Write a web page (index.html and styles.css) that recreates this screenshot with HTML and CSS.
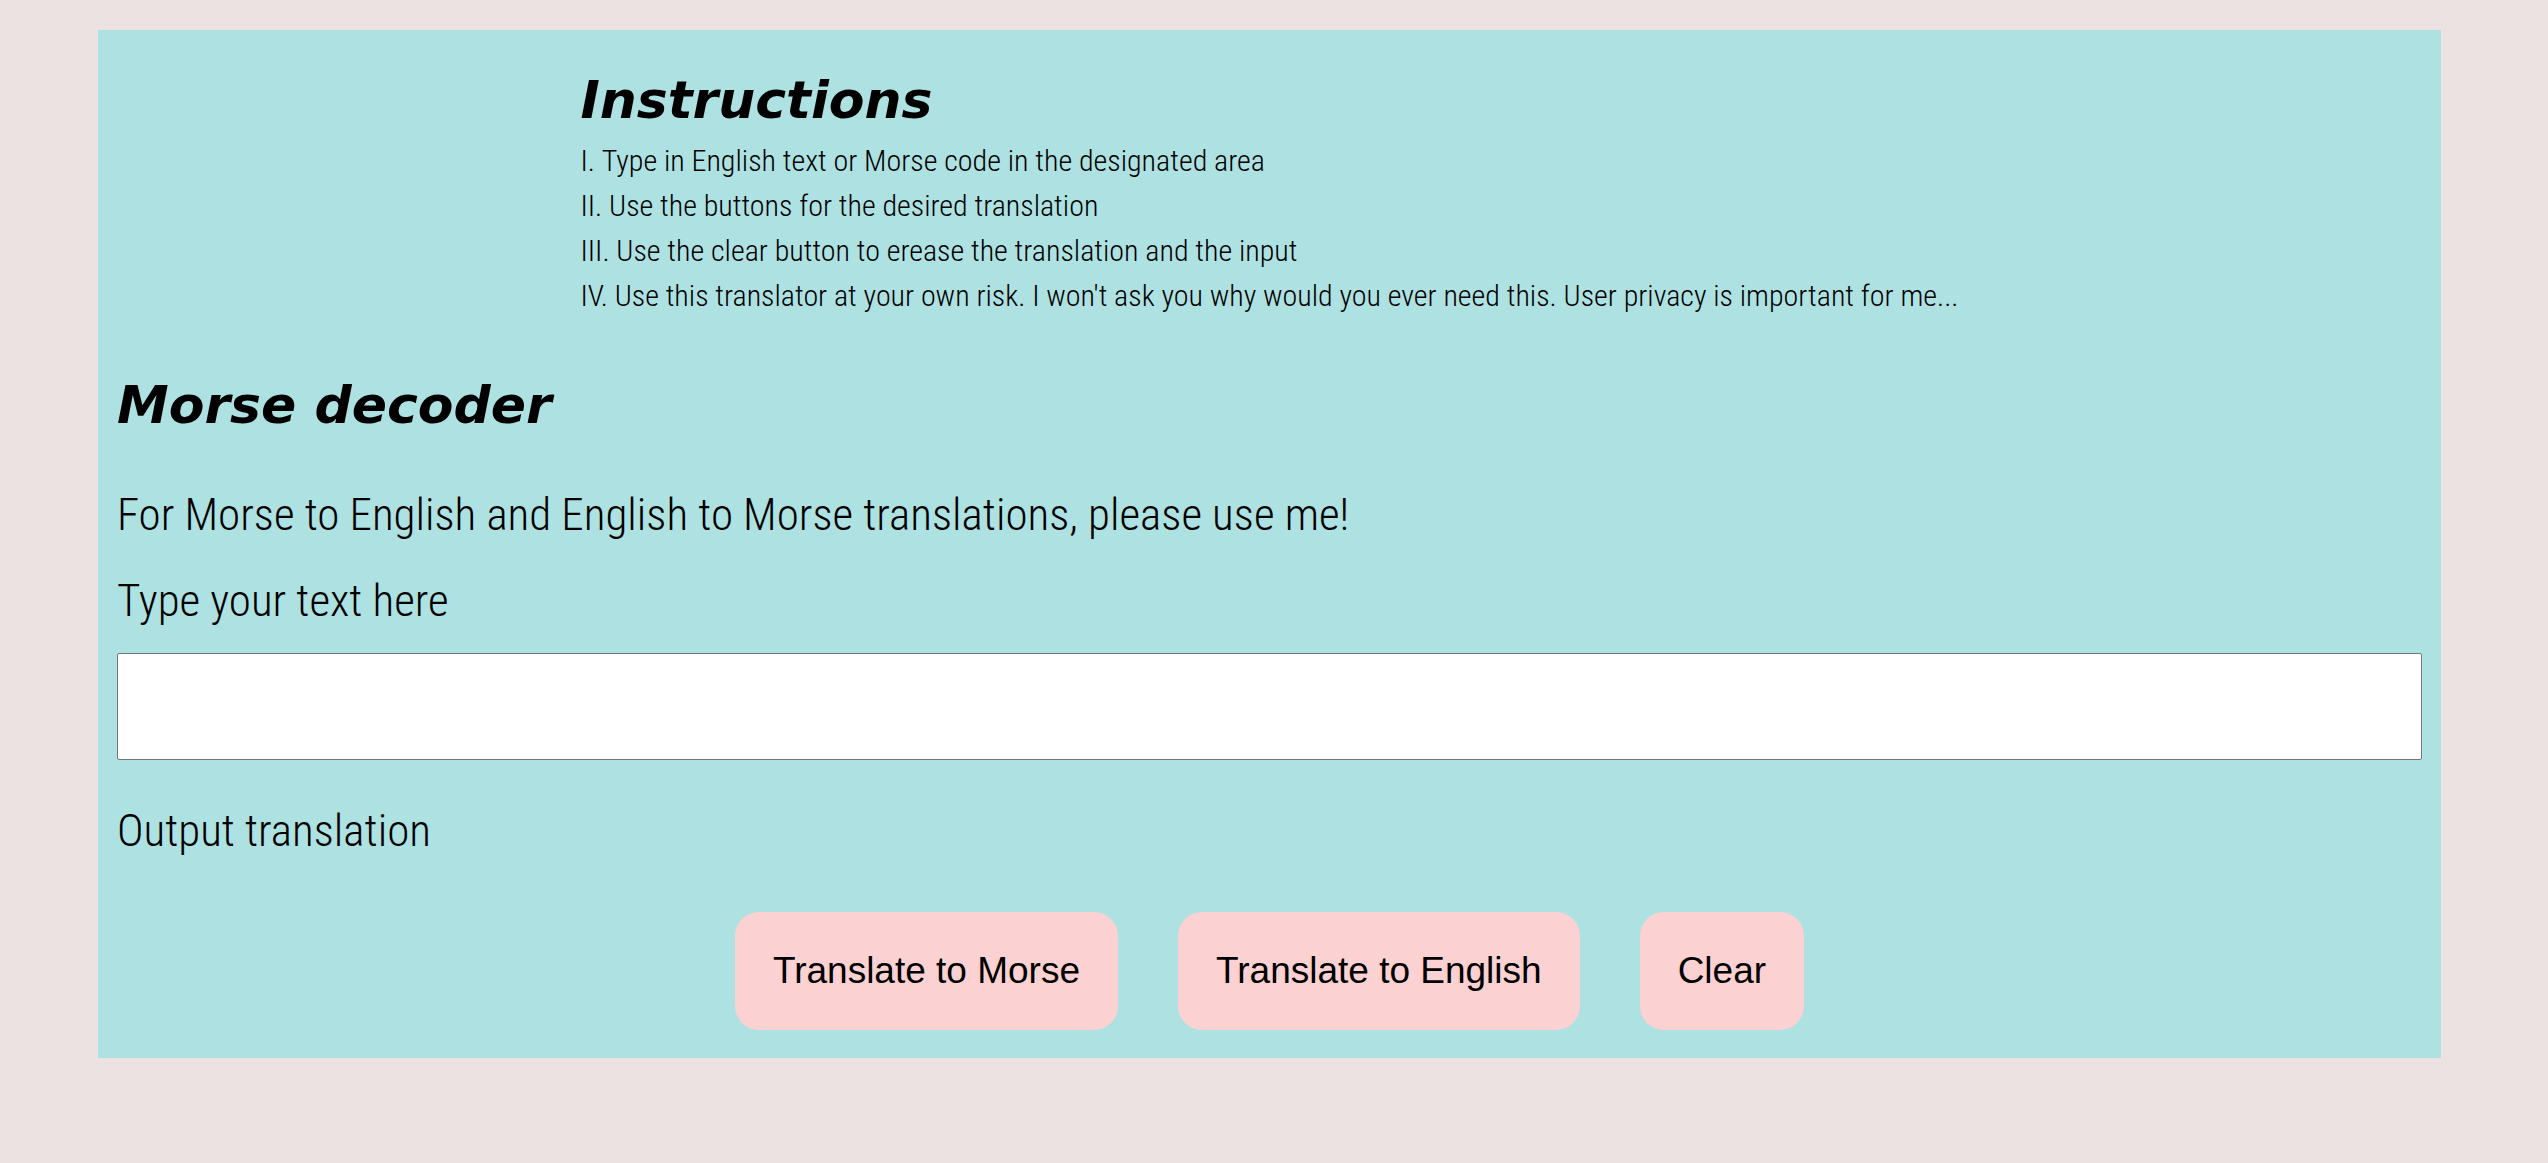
FILE: index.html
```html
<!DOCTYPE html>
<html lang="en">
<head>
<meta charset="utf-8">
<meta name="viewport" content="width=device-width, initial-scale=1">
<title>Morse decoder</title>
<link rel="stylesheet" href="styles.css">
</head>
<body>
<main class="container">
  <section class="instructions">
    <h2 class="heading">Instructions</h2>
    <ol class="steps">
      <li>Type in English text or Morse code in the designated area</li>
      <li>Use the buttons for the desired translation</li>
      <li>Use the clear button to erease the translation and the input</li>
      <li>Use this translator at your own risk. I won't ask you why would you ever need this. User privacy is important for me...</li>
    </ol>
  </section>
  <h1 class="heading title">Morse decoder</h1>
  <p class="text intro">For Morse to English and English to Morse translations, please use me!</p>
  <label class="text label" for="source">Type your text here</label>
  <input class="source" id="source" type="text">
  <p class="text output">Output translation</p>
  <div class="actions">
    <button class="button" type="button">Translate to Morse</button>
    <button class="button" type="button">Translate to English</button>
    <button class="button" type="button">Clear</button>
  </div>
</main>
</body>
</html>
```
FILE: styles.css
```css
* {
  box-sizing: border-box;
}

body {
  margin: 0;
  padding: 30px 107px 30px 98px;
  background: #ece2e1;
  color: #000;
  font-family: "Roboto Condensed", Roboto, sans-serif;
  font-weight: 300;
}

.container {
  display: flex;
  flex-direction: column;
  padding: 40px 19px 28px;
  background: #aee1e1;
}

.instructions {
  align-self: center;
}

.heading {
  margin: 0;
  font-family: "DejaVu Sans", sans-serif;
  font-size: 52px;
  font-style: italic;
  font-weight: bold;
  line-height: 60px;
}

.steps {
  margin: 8px 0 0;
  padding: 0;
  list-style: upper-roman inside;
  font-size: 30px;
  line-height: 45px;
}

.title {
  margin-top: 57px;
}

.text {
  margin: 0;
  font-size: 45px;
  line-height: 60px;
}

.intro {
  margin-top: 50px;
}

.label {
  margin: 26px 0 22px;
}

.source {
  width: 100%;
  height: 107px;
  padding: 0 16px;
  border: 1px solid #767676;
  border-radius: 2px;
  font: inherit;
  font-size: 45px;
}

.output {
  margin: 41px 0 51px;
}

.actions {
  display: flex;
  flex-wrap: wrap;
  justify-content: center;
  gap: 60px;
}

.button {
  padding: 38px;
  border: 0;
  border-radius: 24px;
  background: #fcd1d1;
  color: #000;
  font-family: "Liberation Sans", sans-serif;
  font-size: 37px;
  line-height: 42px;
}
```
